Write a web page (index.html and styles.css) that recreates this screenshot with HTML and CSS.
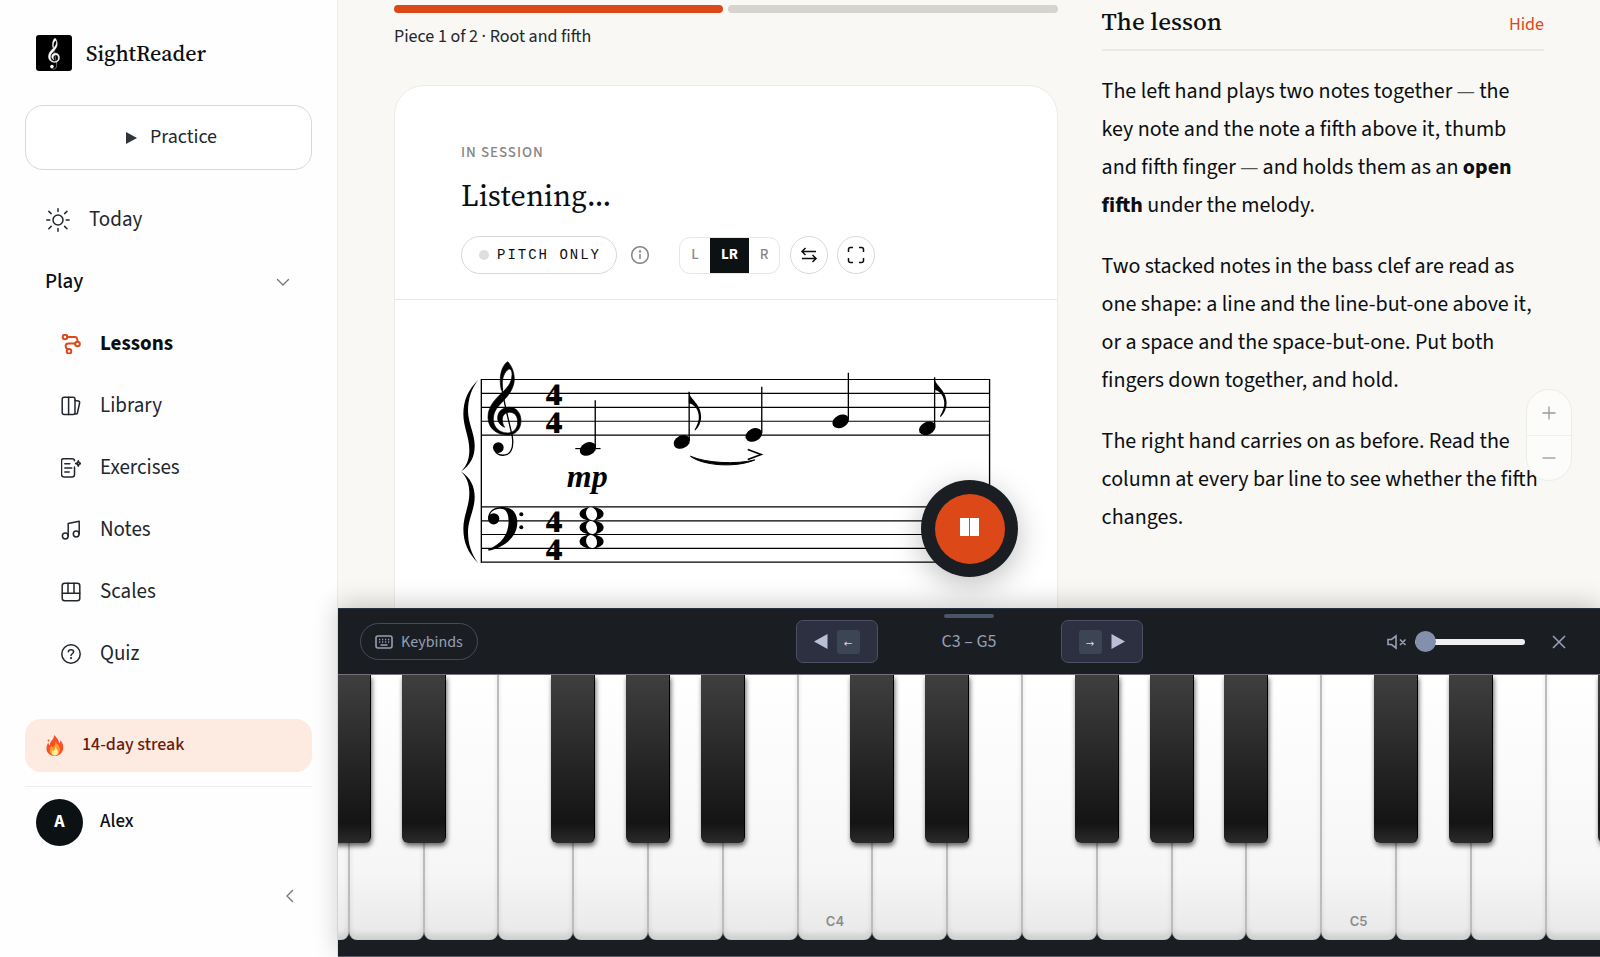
FILE: index.html
```html
<!DOCTYPE html>
<html lang="en">
<head>
  <meta charset="UTF-8" />
  <meta name="viewport" content="width=device-width, initial-scale=1.0"/>
  <title>SightReader</title>
  <link rel="stylesheet" href="styles.css">
</head>
<body>
  <div class="app">
    <!-- Sidebar -->
    <aside class="sidebar">
      <a class="brand" href="#">
        <svg class="brand-logo" viewBox="0 0 36 36" aria-hidden="true">
          <rect width="36" height="36" rx="3" fill="#000"/>
          <g transform="translate(-3.3 -4)" fill="#fff" stroke="#fff" stroke-width="5">
            <use href="#treble" transform="scale(.11)"/>
          </g>
        </svg>
        <span>SightReader</span>
      </a>

      <button class="practice">
        <svg width="11" height="12" viewBox="0 0 11 12" aria-hidden="true"><path d="M0 0L11 6L0 12Z" fill="#30353b"/></svg>
        <span>Practice</span>
      </button>

      <nav class="nav">
        <a class="nav-item" href="#">
          <svg class="icon-lg" viewBox="0 0 24 24" aria-hidden="true"><circle cx="12" cy="12" r="5"/><path d="M12 .8v2.6M12 20.6v2.6M.8 12h3M20.2 12h3M2.8 3.4l2.4 2.2M18.6 18.4l2.4 2.4M2.8 20.8l2.4-2.4M18.6 5.6L21 3.4"/></svg>
          <span>Today</span>
        </a>
        <button class="nav-group" aria-expanded="true">
          <span>Play</span>
          <svg width="14" height="14" viewBox="0 0 14 14" aria-hidden="true"><path d="M1.5 4.5L7 10l5.500-5.500"/></svg>
        </button>
        <a class="nav-item sub active" href="#">
          <svg class="icon" viewBox="0 0 20 20" aria-hidden="true"><circle cx="4" cy="3" r="2.300"/><circle cx="16.500" cy="10" r="2.300"/><circle cx="8" cy="17.300" r="2.300"/><path d="M6.300 3H14c2 0 2.500 1.400 2.500 4.600M14.200 9.500H7.500C5 9.500 4.500 11 4.700 12.500c.2 1.600 1 2 2 3"/></svg>
          <span>Lessons</span>
        </a>
        <a class="nav-item sub" href="#">
          <svg class="icon" viewBox="0 0 20 20" aria-hidden="true"><rect x="1.200" y="1.200" width="12.800" height="17.400" rx="2"/><path d="M7.600 1.200v17.400M14 4.500l3.300.6c1 .2 1.500.9 1.300 1.900L16.400 17c-.2 1-.9 1.300-2.400 1"/></svg>
          <span>Library</span>
        </a>
        <a class="nav-item sub" href="#">
          <svg class="icon" viewBox="0 0 20 20" aria-hidden="true"><path d="M13.500 9v7.500c0 1.500-1 2.500-2.500 2.500H3c-1.500 0-2.500-1-2.500-2.500V2.500C.5 1.300 1.300.8 2.500.8H11c1.300 0 2.500.4 2.500 2M3.800 5.800h5M3.800 10h7M3.800 14h4.400"/><path d="M17.300 2.800l.8 1.900 1.900.8-1.900.8-.8 1.900-.8-1.900-1.900-.8 1.900-.8z"/></svg>
          <span>Exercises</span>
        </a>
        <a class="nav-item sub" href="#">
          <svg class="icon" viewBox="0 0 20 20" aria-hidden="true"><circle cx="4.300" cy="16" r="2.900"/><circle cx="15.200" cy="14" r="2.900"/><path d="M7.200 16V3.500L18.200 1.200V14"/></svg>
          <span>Notes</span>
        </a>
        <a class="nav-item sub" href="#">
          <svg class="icon" viewBox="0 0 20 20" aria-hidden="true"><rect x="1.200" y="1.200" width="17.600" height="17.600" rx="2.500"/><path d="M1.200 11.200h17.600M7 1.200v10M13 1.200v10"/></svg>
          <span>Scales</span>
        </a>
        <a class="nav-item sub" href="#">
          <svg class="icon" viewBox="0 0 20 20" aria-hidden="true"><circle cx="10" cy="10" r="9.200"/><path d="M7.400 7.800C7.500 6.300 8.600 5.700 10 5.700c1.500 0 2.600.8 2.600 2.100 0 1.900-2.600 2-2.600 3.700"/><circle cx="10" cy="14.200" r=".4"/></svg>
          <span>Quiz</span>
        </a>
      </nav>

      <div class="streak">
        <svg width="18" height="21" viewBox="0 0 18 21" aria-hidden="true">
          <path d="M8 0c2 2 5 4.500 5 8 1 0 1.500-1.500 1.300-2.800C16.500 7.500 18 10.500 17 14.500 16 18.500 13 21 9 21S1 18.500 .5 14.500C.2 11.500 1.500 9 2.300 7.500c.2 1.500.7 2.500 1.700 2.800C3.500 6 8.500 4.500 8 0z" fill="#f4502c"/>
          <path d="M9.500 5.500c0 3 4 4 4.500 8.500.3 4-2 6.500-5 6.500S3.500 18 3.700 14.500c.2-2 1.300-2.500 1.300-4 1 .7 1.500 1.400 1.800 2.300C8.500 11 9.800 8.500 9.500 5.500z" fill="#ff9a24"/>
          <path d="M9.300 11.500c.5 2 2.900 3.200 2.700 5.700-.1 2-1.300 3.300-3 3.300s-3.200-1.200-3.200-3.100c0-1.200.6-1.800.9-2.500.6.400.8.9 1 1.300.9-1.200 1.600-2.500 1.600-4.700z" fill="#fff0a0"/>
          <circle cx="2.500" cy="5.500" r=".9" fill="#f4502c"/>
        </svg>
        <span>14-day streak</span>
      </div>

      <div class="user">
        <span class="avatar">A</span>
        <span class="user-name">Alex</span>
      </div>

      <button class="collapse" aria-label="Collapse sidebar">
        <svg width="14" height="14" viewBox="0 0 14 14" aria-hidden="true"><path d="M10 1L4 7l6 6"/></svg>
      </button>
    </aside>

    <!-- Lesson -->
    <main class="main">
      <section class="piece">
        <div class="progress">
          <span class="bar done"></span>
          <span class="bar"></span>
        </div>
        <p class="piece-label">Piece 1 of 2 · Root and fifth</p>

        <div class="card">
          <header class="card-head">
            <p class="eyebrow">IN SESSION</p>
            <h1>Listening…</h1>
            <div class="controls">
              <button class="pitch"><span class="dot"></span>PITCH ONLY</button>
              <button class="info" aria-label="About pitch only">
                <svg width="18" height="18" viewBox="0 0 18 18" aria-hidden="true"><circle cx="9" cy="9" r="8.300"/><path d="M9 8v5"/><circle cx="9" cy="5.400" r=".5"/></svg>
              </button>
              <div class="hands">
                <button>L</button>
                <button class="on">LR</button>
                <button>R</button>
              </div>
              <button class="round" aria-label="Swap hands">
                <svg width="18" height="18" viewBox="0 0 18 18" aria-hidden="true"><path d="M16 5.500H2M5.500 2L2 5.500 5.500 9M2 12.500h14M12.500 9l3.500 3.500-3.500 3.500"/></svg>
              </button>
              <button class="round" aria-label="Full screen">
                <svg width="18" height="18" viewBox="0 0 18 18" aria-hidden="true"><path d="M1.500 6V3.500c0-1.200.8-2 2-2H6M12 1.500h2.500c1.200 0 2 .8 2 2V6M16.500 12v2.500c0 1.200-.8 2-2 2H12M6 16.500H3.500c-1.200 0-2-.8-2-2V12"/></svg>
              </button>
            </div>
          </header>

          <div class="score">
            <svg class="staff" viewBox="63 60 1590 612" role="img" aria-label="Grand staff, one bar in 4/4">
              <defs>
                <g id="treble">
                  <path d="M203 65C214 76 223 95 223 118C222 150 200 172 185 188C167 206 160 220 160 238C160 262 178 279 203 279C222 279 233 264 233 246C233 228 224 217 209 217C196 217 187 227 187 238C187 250 190 256 194 262C180 256 173 245 173 234C173 215 188 202 208 202C230 202 243 220 243 242C243 268 228 285 203 285C170 285 144 265 144 232C144 200 165 178 186 158C200 146 215 130 216 106C217 95 213 87 209 87C200 87 187 108 187 128L188 150L184 150C176 115 183 78 203 65Z"/>
                  <path fill="none" stroke-width="4" d="M186 145C190 180 206 240 217 290C222 325 212 346 190 346C178 346 168 340 164 330"/>
                  <circle cx="175" cy="323" r="16" stroke="none"/>
                </g>
                <path id="brace" d="M115 119C85 148 70 180 70 222C70 262 88 290 88 330C88 360 78 380 63 394.500C92 375 104 350 104 318C104 280 84 250 84 212C84 175 95 145 115 119Z"/>
                <ellipse id="head" rx="26" ry="19" transform="rotate(-27)"/>
                <path id="flag" d="M0 0C4 24 37 36 37 76C37 92 30 106 19 117L17 115C26 100 31 86 30 73C28 50 14 38 0 35Z"/>
                <g id="whole">
                  <ellipse rx="36" ry="21"/>
                  <ellipse rx="16" ry="20" fill="#fff" transform="rotate(-20)"/>
                </g>
              </defs>

              <!-- staves and bar lines -->
              <path class="line" d="M124 118.500H1650M124 160H1650M124 202H1650M124 244H1650M124 285.500H1650"/>
              <path class="line" d="M124 501H1650M124 543H1650M124 584H1650M124 625.500H1650M124 667H1650"/>
              <path class="barline" d="M124 117V669M1650 117V669"/>

              <use href="#brace"/>
              <use href="#brace" transform="matrix(1 0 0 -1 0 789)"/>

              <!-- clefs -->
              <use href="#treble" stroke="#000" stroke-width="2"/>
              <path d="M144 538C144 515 160 501 185 501C215 501 232 518 232 548C232 590 195 622 146 633L144 629C185 612 205 585 206 545C206 520 198 507 182 507C165 507 152 515 150 526Z"/>
              <circle cx="161" cy="537" r="17"/>
              <circle cx="244" cy="523" r="6"/>
              <circle cx="244" cy="562" r="6"/>

              <!-- time signature and dynamics -->
              <g class="time">
                <text x="343" y="194">4</text>
                <text x="343" y="278">4</text>
                <text x="343" y="576">4</text>
                <text x="343" y="660">4</text>
              </g>
              <text class="dynamic" x="442" y="441">mp</text>

              <!-- right hand -->
              <path class="line" d="M406 326H482"/>
              <use href="#head" transform="translate(444 327)"/>
              <use href="#head" transform="translate(726 306)"/>
              <use href="#head" transform="translate(942 285)"/>
              <use href="#head" transform="translate(1203 244)"/>
              <use href="#head" transform="translate(1463 265)"/>
              <path class="stem" d="M466 181V322M748 155V300M966 140V280M1226 98V238M1485 112V258"/>
              <use href="#flag" transform="translate(747 155)"/>
              <use href="#flag" transform="translate(1484 114)"/>
              <path d="M752 349C790 378 890 384 945 360C890 374 800 370 752 349Z" stroke="#000" stroke-width="3"/>
              <path class="accent" d="M924 329L964 344L924 359"/>

              <!-- left hand -->
              <use href="#whole" transform="translate(455 522)"/>
              <use href="#whole" transform="translate(455 563)"/>
              <use href="#whole" transform="translate(455 605)"/>
            </svg>
          </div>
        </div>
      </section>

      <section class="lesson">
        <header class="lesson-head">
          <h2>The lesson</h2>
          <button class="hide">Hide</button>
        </header>
        <p>The left hand plays two notes together <span class="dash">—</span> the key note and the note a fifth above it, thumb and fifth finger <span class="dash">—</span> and holds them as an <strong>open fifth</strong> under the melody.</p>
        <p>Two stacked notes in the bass clef are read as one shape: a line and the line-but-one above it, or a space and the space-but-one. Put both fingers down together, and hold.</p>
        <p>The right hand carries on as before. Read the column at every bar line to see whether the fifth changes.</p>
      </section>
    </main>
  </div>

  <!-- Floating controls -->
  <button class="pause" aria-label="Pause"><span class="pause-inner"><i></i><i></i></span></button>

  <div class="zoom">
    <button aria-label="Zoom in"><svg width="14" height="14" viewBox="0 0 14 14"><path d="M7 .5v13M.5 7h13"/></svg></button>
    <button aria-label="Zoom out"><svg width="14" height="14" viewBox="0 0 14 14"><path d="M.5 7h13"/></svg></button>
  </div>

  <!-- Piano -->
  <section class="piano">
    <div class="toolbar">
      <span class="grip"></span>
      <div class="tools-left">
        <button class="keybinds">
          <svg width="18" height="14" viewBox="0 0 18 14" aria-hidden="true"><rect x="1" y="1" width="16" height="12" rx="2"/><path d="M4 4.500h1.200M7 4.500h1.200M10 4.500h1.200M13 4.500h1.200M4 7h1.200M7 7h1.200M10 7h1.200M13 7h1.200M5.500 10h7"/></svg>
          Keybinds
        </button>
      </div>
      <div class="range">
        <button class="shift" aria-label="Lower octave">
          <svg width="14" height="15" viewBox="0 0 14 15" aria-hidden="true"><path d="M13.500 0v15L0 7.500z"/></svg>
          <kbd>←</kbd>
        </button>
        <span class="range-label">C3 – G5</span>
        <button class="shift" aria-label="Higher octave">
          <kbd>→</kbd>
          <svg width="14" height="15" viewBox="0 0 14 15" aria-hidden="true"><path d="M.5 0v15L14 7.500z"/></svg>
        </button>
      </div>
      <div class="tools-right">
        <button class="mute" aria-label="Mute">
          <svg width="20" height="16" viewBox="0 0 20 16" aria-hidden="true"><path d="M1 5.500h3.500L9 2v12L4.500 10.500H1zM13 5.500l5.500 5.500M18.500 5.500L13 11"/></svg>
        </button>
        <input class="volume" type="range" min="0" max="100" value="0" aria-label="Volume">
        <button class="close" aria-label="Close keyboard">
          <svg width="14" height="14" viewBox="0 0 14 14" aria-hidden="true"><path d="M1 1l12 12M13 1L1 13"/></svg>
        </button>
      </div>
    </div>

    <div class="keys-view">
      <div class="keys">
        <div class="key"><button class="white" aria-label="C3"></button><button class="black" aria-label="C#3"></button></div>
        <div class="key"><button class="white" aria-label="D3"></button><button class="black" aria-label="D#3"></button></div>
        <div class="key"><button class="white" aria-label="E3"></button></div>
        <div class="key"><button class="white" aria-label="F3"></button><button class="black" aria-label="F#3"></button></div>
        <div class="key"><button class="white" aria-label="G3"></button><button class="black" aria-label="G#3"></button></div>
        <div class="key"><button class="white" aria-label="A3"></button><button class="black" aria-label="A#3"></button></div>
        <div class="key"><button class="white" aria-label="B3"></button></div>
        <div class="key"><button class="white">C4</button><button class="black" aria-label="C#4"></button></div>
        <div class="key"><button class="white" aria-label="D4"></button><button class="black" aria-label="D#4"></button></div>
        <div class="key"><button class="white" aria-label="E4"></button></div>
        <div class="key"><button class="white" aria-label="F4"></button><button class="black" aria-label="F#4"></button></div>
        <div class="key"><button class="white" aria-label="G4"></button><button class="black" aria-label="G#4"></button></div>
        <div class="key"><button class="white" aria-label="A4"></button><button class="black" aria-label="A#4"></button></div>
        <div class="key"><button class="white" aria-label="B4"></button></div>
        <div class="key"><button class="white">C5</button><button class="black" aria-label="C#5"></button></div>
        <div class="key"><button class="white" aria-label="D5"></button><button class="black" aria-label="D#5"></button></div>
        <div class="key"><button class="white" aria-label="E5"></button></div>
        <div class="key"><button class="white" aria-label="F5"></button><button class="black" aria-label="F#5"></button></div>
        <div class="key"><button class="white" aria-label="G5"></button></div>
      </div>
    </div>
  </section>
</body>
</html>
```
FILE: styles.css
```css
* {
  box-sizing: border-box;
}
body {
  margin: 0;
  font-family: "Source Sans 3", "Noto Sans CJK SC", "Noto Sans", sans-serif;
  font-size: 20px;
  line-height: 28px;
  color: #0b0f12;
  background: #f9f8f4;
  height: 100vh;
  overflow: hidden;
}
button {
  font: inherit;
  color: inherit;
  background: none;
  border: none;
  padding: 0;
  cursor: pointer;
}
a {
  color: inherit;
  text-decoration: none;
}
h1, h2, p {
  margin: 0;
}
svg {
  display: block;
  flex: none;
}
.app {
  display: grid;
  grid-template-columns: 338px 1fr;
  height: 100vh;
}

/* Sidebar */
.sidebar {
  display: flex;
  flex-direction: column;
  padding: 35px 25px 0;
  background: #fefefe;
  border-right: 1px solid #ecebe8;
}
.brand {
  display: flex;
  align-items: center;
  gap: 14px;
  height: 36px;
  padding-left: 11px;
  font-family: "Source Serif 4", "Noto Serif CJK SC", "Noto Serif", "Liberation Serif", serif;
  font-size: 22px;
  font-weight: 500;
}
.brand-logo {
  width: 36px;
  height: 36px;
}
.practice {
  display: flex;
  align-items: center;
  justify-content: center;
  gap: 13px;
  height: 65px;
  margin-top: 34px;
  padding-left: 6px;
  border: 1px solid #d8d8d8;
  border-radius: 18px;
  color: #22272e;
  background: #fff;
}
.practice span, .nav span, .streak span, .user-name {
  padding-bottom: 2px;
}
.nav {
  display: flex;
  flex-direction: column;
  margin-top: 19px;
  font-size: 21px;
}
.nav-item, .nav-group {
  display: flex;
  align-items: center;
  height: 62px;
  padding: 0 22px 0 21px;
  gap: 19px;
  color: #22272e;
}
.nav-group {
  justify-content: space-between;
  padding-left: 20px;
  font-weight: 500;
  color: #0b0f12;
}
.nav-item.sub {
  padding-left: 36px;
}
.nav-item.active {
  font-weight: 700;
  color: #0b0f12;
}
.nav svg {
  fill: none;
  stroke: currentColor;
  stroke-width: 1.5;
  stroke-linecap: round;
  stroke-linejoin: round;
}
.nav .nav-group svg, .collapse svg {
  fill: none;
  stroke: #777;
  stroke-width: 1.3;
}
.nav .icon-lg {
  width: 24px;
  height: 24px;
}
.nav .icon {
  width: 20px;
  height: 20px;
}
.nav .active .icon {
  stroke: #dd4819;
  stroke-width: 2;
}
.streak {
  display: flex;
  align-items: center;
  gap: 18px;
  height: 53px;
  margin-top: 34px;
  padding-left: 21px;
  border-radius: 16px;
  background: #fdeae0;
  color: #6b1a0c;
  font-size: 18px;
  font-weight: 500;
}
.user {
  display: flex;
  align-items: center;
  gap: 17px;
  margin-top: 14px;
  padding: 12px 11px;
  border-top: 1px solid #ededed;
  font-size: 19px;
  font-weight: 500;
}
.avatar {
  display: grid;
  place-items: center;
  width: 47px;
  height: 47px;
  padding-bottom: 2px;
  border-radius: 50%;
  background: #0c1113;
  color: #fff;
  font-size: 18px;
  font-weight: 700;
}
.collapse {
  align-self: flex-end;
  margin: 31px 15px 0 0;
}

/* Lesson */
.main {
  display: grid;
  grid-template-columns: 3fr 2fr;
  gap: 44px;
  padding: 5px 56px 0;
  overflow: hidden;
}
.piece {
  display: flex;
  flex-direction: column;
}
.progress {
  display: flex;
  gap: 5px;
}
.bar {
  flex: 1;
  height: 8px;
  border-radius: 4px;
  background: #d5d4cf;
}
.bar.done {
  background: #dd4819;
}
.piece-label {
  margin: 12px 0 36px;
  font-size: 18px;
  line-height: 24px;
  color: #22272e;
}
.card {
  flex: 1;
  border: 1px solid #ebebe9;
  border-radius: 30px 30px 0 0;
  background: #fff;
}
.card-head {
  padding: 57px 66px 25px;
  border-bottom: 1px solid #e6e6e6;
}
.eyebrow {
  font-size: 15px;
  line-height: 20px;
  font-weight: 500;
  letter-spacing: 1px;
  color: #858585;
}
h1 {
  margin: 13px 0 20px;
  font-family: "Source Serif 4", "Noto Serif CJK SC", "Noto Serif", "Liberation Serif", serif;
  font-size: 30px;
  line-height: 40px;
  font-weight: 400;
}
.controls {
  display: flex;
  align-items: center;
}
.pitch {
  display: flex;
  align-items: center;
  gap: 8px;
  height: 38px;
  padding: 0 15px 0 17px;
  border: 1px solid #d8d8d8;
  border-radius: 19px;
  font-family: "Liberation Mono", monospace;
  font-size: 14px;
  letter-spacing: 2px;
}
.dot {
  width: 10px;
  height: 10px;
  border-radius: 50%;
  background: #dedede;
}
.controls svg {
  fill: none;
  stroke: currentColor;
  stroke-width: 1.5;
}
.info {
  margin-left: 14px;
  color: #888;
}
.hands {
  display: flex;
  height: 37px;
  margin: 0 10px 0 30px;
  border: 1px solid #e6e6e6;
  border-radius: 11px;
  font-size: 15px;
  font-weight: 500;
  color: #888;
}
.hands button {
  width: 30px;
}
.hands .on {
  width: 39px;
  background: #0c1113;
  color: #fff;
  font-weight: 700;
}
.round {
  display: grid;
  place-items: center;
  width: 38px;
  height: 38px;
  margin-right: 9px;
  border: 1px solid #d8d8d8;
  border-radius: 50%;
}
.score {
  padding: 60px 66px;
}
.staff {
  width: 100%;
}
.line, .barline, .stem, .accent {
  fill: none;
  stroke: #000;
  stroke-width: 3.5;
}
.barline, .stem {
  stroke-width: 4;
}
.accent {
  stroke-width: 5;
}
.time {
  font-family: "Source Serif 4", "Noto Serif CJK SC", "Liberation Serif", serif;
  font-weight: 900;
  font-size: 94px;
  text-anchor: middle;
}
.dynamic {
  font-family: "Liberation Serif", serif;
  font-weight: 700;
  font-size: 96px;
  font-style: italic;
  text-anchor: middle;
}
.lesson-head {
  display: flex;
  align-items: flex-end;
  justify-content: space-between;
  padding-bottom: 10px;
  margin-bottom: 21px;
  border-bottom: 2px solid #ebeae6;
}
h2 {
  padding-bottom: 2px;
  font-family: "Source Serif 4", "Noto Serif CJK SC", "Noto Serif", "Liberation Serif", serif;
  font-size: 25px;
  line-height: 32px;
  font-weight: 500;
}
.hide {
  font-size: 18px;
  color: #dd4819;
}
.lesson p {
  padding-right: 2px;
  margin-bottom: 23px;
  font-size: 22px;
  line-height: 38px;
}
.dash {
  font-family: "Open Sans", sans-serif;
  font-size: 18px;
  line-height: 20px;
  color: #555;
}

/* Floating controls */
.pause {
  position: absolute;
  right: 582px;
  bottom: 380px;
  display: grid;
  place-items: center;
  width: 97px;
  height: 97px;
  border-radius: 50%;
  background: #1a1e22;
  box-shadow: 0 8px 30px rgba(0,0,0,0.25);
}
.pause-inner {
  display: flex;
  align-items: center;
  justify-content: center;
  gap: 1px;
  width: 70px;
  height: 70px;
  padding-bottom: 4px;
  border-radius: 50%;
  background: #dd4819;
}
.pause-inner i {
  width: 9px;
  height: 18px;
  background: #fff;
}
.zoom {
  position: absolute;
  right: 28px;
  top: 389px;
  width: 46px;
  border: 1px solid #ececea;
  border-radius: 23px;
  background: rgba(255,255,255,0.5);
}
.zoom button {
  display: grid;
  place-items: center;
  width: 100%;
  height: 45px;
}
.zoom button + button {
  border-top: 1px solid #f0f0ee;
}
.zoom path {
  stroke: #999;
  stroke-width: 1.3;
}

/* Piano */
.piano {
  position: absolute;
  left: 338px;
  right: 0;
  bottom: 0;
  background: #1a1e23;
  border-top: 1px solid #253241;
  border-bottom: 1px solid #5c5c66;
  box-shadow: 0 -4px 24px rgba(0,0,0,0.2);
}
.toolbar {
  position: relative;
  display: grid;
  grid-template-columns: 1fr auto 1fr;
  align-items: center;
  height: 65px;
  padding: 0 34px 0 22px;
  color: #969fb5;
  font-size: 16px;
}
.toolbar svg {
  fill: none;
  stroke: currentColor;
  stroke-width: 1.6;
}
.grip {
  position: absolute;
  top: 5px;
  left: 50%;
  width: 50px;
  height: 4px;
  margin-left: -25px;
  border-radius: 2px;
  background: #4a5568;
}
.keybinds {
  display: flex;
  align-items: center;
  gap: 8px;
  height: 37px;
  padding: 0 14px;
  border: 1px solid #484a5c;
  border-radius: 19px;
}
.range {
  display: flex;
  align-items: center;
  margin-left: 12px;
}
.range-label {
  width: 183px;
  text-align: center;
  font-size: 18px;
}
.shift {
  display: flex;
  align-items: center;
  justify-content: center;
  gap: 9px;
  width: 82px;
  height: 43px;
  border: 1px solid #4c4f66;
  border-radius: 7px;
  background: #2d3040;
}
.toolbar .shift svg {
  fill: #b9bfd4;
  stroke: none;
}
kbd {
  display: grid;
  place-items: center;
  width: 23px;
  height: 24px;
  border-radius: 3px;
  background: #3c4554;
  color: #d5dae5;
  font-family: "DejaVu Sans", sans-serif;
  font-size: 10px;
}
.tools-right {
  display: flex;
  align-items: center;
  justify-content: flex-end;
}
.volume {
  appearance: none;
  width: 110px;
  height: 20px;
  margin: 0 27px 0 8px;
  background: none;
}
.volume::-webkit-slider-runnable-track {
  height: 6px;
  border-radius: 3px;
  background: #efefef;
}
.volume::-webkit-slider-thumb {
  appearance: none;
  width: 21px;
  height: 21px;
  margin-top: -8px;
  border-radius: 50%;
  background: #8290ac;
}
.keys-view {
  overflow: hidden;
  padding-bottom: 16px;
}
.keys {
  display: flex;
  width: 1421px;
  height: 266px;
  margin-left: -64px;
  border-top: 1px solid #77777c;
}
.key {
  flex: 1;
  position: relative;
}
.white {
  display: flex;
  align-items: flex-end;
  justify-content: center;
  width: 100%;
  height: 100%;
  padding-bottom: 4px;
  border: 1px solid #bcbcbc;
  border-top: none;
  border-bottom-color: #ccc;
  border-radius: 0 0 8px 8px;
  background: linear-gradient(#fff, #f6f6f6 75%, #e8e8e8);
  box-shadow: inset 0 -5px 5px rgba(0,0,0,0.1);
  font-family: Inter, sans-serif;
  font-size: 13px;
  font-weight: 600;
  color: #8c8c8c;
}
.black {
  position: absolute;
  z-index: 1;
  top: 0;
  right: -22px;
  width: 44px;
  height: 168px;
  border-right: 1px solid #000;
  border-radius: 0 0 6px 6px;
  background: linear-gradient(#3f3f3f, #141414 88%, #2b2b2b);
  box-shadow: 1px 3px 5px rgba(0,0,0,0.6);
}
```
